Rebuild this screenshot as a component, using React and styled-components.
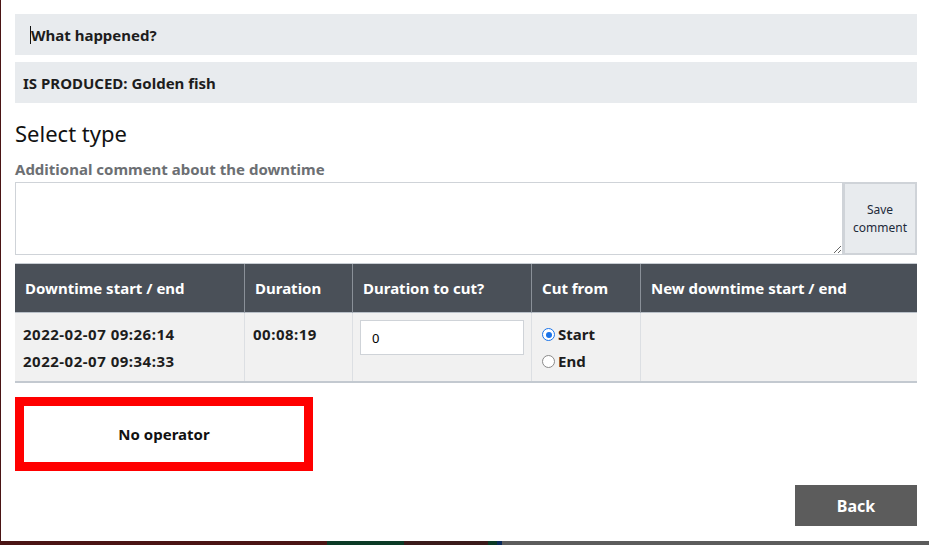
import React from "react";
import styled, { createGlobalStyle } from "styled-components";

const Global = createGlobalStyle`
  html, body { margin: 0; padding: 0; }
  body {
    width: 929px;
    height: 545px;
    overflow: hidden;
    font-family: "Noto Sans", "Open Sans", sans-serif;
    color: #1d1d1d;
    background: linear-gradient(to right,
      #4a1414 0, #4a1414 327px,
      #0b3a26 327px, #0b3a26 404px,
      #3a1a1a 404px, #3a1a1a 488px,
      #0b3a26 488px, #0b3a26 497px,
      #0a2a5a 497px, #0a2a5a 502px,
      #5c5c5c 502px, #5c5c5c 929px);
  }
`;

const Modal = styled.div`
  margin-left: 1px;
  width: 928px;
  height: 541px;
  background: #fff;
  box-sizing: border-box;
  padding: 14px 12px 0 14px;
  display: flex;
  flex-direction: column;
`;

const InfoBar = styled.div`
  height: 41px;
  background: #e8ebee;
  display: flex;
  align-items: center;
  padding-left: ${(p) => p.$indent}px;
  font-size: 15px;
  font-weight: 700;
  color: #1d1d1d;
  margin-bottom: 7px;
`;

const Caret = styled.span`
  display: inline-block;
  width: 1px;
  height: 18px;
  background: #111;
`;

const Title = styled.h2`
  margin: 9px 0 0;
  font-size: 22px;
  font-weight: 400;
  color: #111;
  line-height: 28px;
`;

const Label = styled.div`
  margin-top: 12px;
  font-size: 15px;
  font-weight: 700;
  color: #6c6f73;
  line-height: 20px;
`;

const CommentRow = styled.div`
  margin-top: 3px;
  display: flex;
  height: 73px;
`;

const TextArea = styled.textarea`
  flex: 1;
  box-sizing: border-box;
  border: 1px solid #cfd3d8;
  resize: both;
  font-family: inherit;
  margin: 0;
`;

const SaveButton = styled.button`
  width: 74px;
  box-sizing: border-box;
  border: 2px solid #cfd3d8;
  background: #e8ebee;
  color: #1d2a3a;
  font-family: inherit;
  font-size: 12px;
  line-height: 18px;
  padding: 0;
`;

const Table = styled.div`
  margin-top: 8px;
  display: grid;
  grid-template-columns: 229px 108px 179px 109px 1fr;
  border-top: 1px solid #c8cdd3;
  border-bottom: 2px solid #c3c9d0;
`;

const HeadCell = styled.div`
  background: #4a5058;
  color: #fff;
  font-weight: 700;
  font-size: 15px;
  height: 48px;
  display: flex;
  align-items: center;
  padding-left: 10px;
  border-left: ${(p) => (p.$first ? "none" : "1px solid #8a9098")};
  border-bottom: 1px solid #b9c0c8;
`;

const BodyCell = styled.div`
  background: #f1f1f1;
  height: 68px;
  box-sizing: border-box;
  padding: ${(p) => p.$pad || "8px 0 0 8px"};
  border-left: ${(p) => (p.$first ? "none" : "1px solid #dcdfe3")};
  font-weight: 700;
  font-size: 15px;
  line-height: 27px;
  letter-spacing: ${(p) => (p.$digits ? "0.5px" : "0")};
  color: #1d1d1d;
`;

const NumInput = styled.input`
  box-sizing: border-box;
  width: 164px;
  height: 35px;
  border: 1px solid #cfd3d8;
  background: #fff;
  font-family: inherit;
  font-size: 13px;
  padding: 0 11px;
  margin: 0;
`;

const RadioRow = styled.label`
  display: flex;
  align-items: center;
  gap: 3px;
  height: 27px;
`;

const Radio = styled.span`
  width: 13px;
  height: 13px;
  box-sizing: border-box;
  border-radius: 50%;
  border: ${(p) => (p.$on ? "1.5px solid #1a73e8" : "1.5px solid #8a8a8a")};
  display: inline-flex;
  align-items: center;
  justify-content: center;
  background: #fff;
  &::after {
    content: "";
    display: ${(p) => (p.$on ? "block" : "none")};
    width: 6px;
    height: 6px;
    border-radius: 50%;
    background: #1a73e8;
  }
`;

const OperatorBox = styled.div`
  margin-top: 14px;
  width: 298px;
  height: 74px;
  box-sizing: border-box;
  border: 9px solid #ff0000;
  display: flex;
  align-items: center;
  justify-content: center;
  font-weight: 700;
  font-size: 15px;
  color: #111;
`;

const Footer = styled.div`
  display: flex;
  justify-content: flex-end;
  margin-top: 14px;
`;

const BackButton = styled.button`
  width: 122px;
  height: 41px;
  border: none;
  background: #5c5c5c;
  color: #fff;
  font-family: inherit;
  font-weight: 700;
  font-size: 16px;
`;

export default function App() {
  return (
    <>
      <Global />
      <Modal>
        <InfoBar $indent={15}>
          <Caret />
          What happened?
        </InfoBar>
        <InfoBar $indent={8}>IS PRODUCED: Golden fish</InfoBar>
        <Title>Select type</Title>
        <Label>Additional comment about the downtime</Label>
        <CommentRow>
          <TextArea />
          <SaveButton>
            Save
            <br />
            comment
          </SaveButton>
        </CommentRow>
        <Table>
          <HeadCell $first>Downtime start / end</HeadCell>
          <HeadCell>Duration</HeadCell>
          <HeadCell>Duration to cut?</HeadCell>
          <HeadCell>Cut from</HeadCell>
          <HeadCell>New downtime start / end</HeadCell>
          <BodyCell $first $digits>
            2022-02-07 09:26:14
            <br />
            2022-02-07 09:34:33
          </BodyCell>
          <BodyCell $digits>00:08:19</BodyCell>
          <BodyCell $pad="7px 0 0 7px">
            <NumInput defaultValue="0" />
          </BodyCell>
          <BodyCell $pad="8px 0 0 10px">
            <RadioRow>
              <Radio $on />
              Start
            </RadioRow>
            <RadioRow>
              <Radio />
              End
            </RadioRow>
          </BodyCell>
          <BodyCell />
        </Table>
        <OperatorBox>No operator</OperatorBox>
        <Footer>
          <BackButton>Back</BackButton>
        </Footer>
      </Modal>
    </>
  );
}
